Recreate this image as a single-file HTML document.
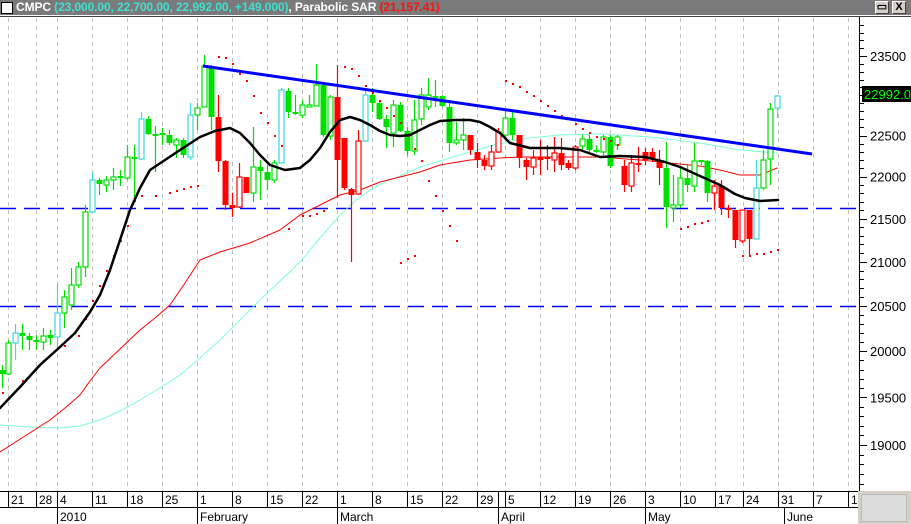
<!DOCTYPE html>
<html><head><meta charset="utf-8">
<style>
html,body{margin:0;padding:0;background:#fff;width:911px;height:524px;overflow:hidden;font-family:"Liberation Sans",sans-serif}
#bar{position:absolute;left:0;top:0;width:911px;height:15px;background:#7a7a7a;border-bottom:1px solid #fff}
#bar2{position:absolute;left:0;top:16px;width:911px;height:1px;background:#404040}
#ttl{position:absolute;left:16px;top:0;font-size:12px;font-weight:bold;line-height:14px;color:#fff;white-space:nowrap;letter-spacing:-0.1px}
.cy{color:#40e0d0}.rd{color:#ff1010}
#chk{position:absolute;left:1px;top:2px;width:12px;height:12px;background:#fff;border:1px solid #000;box-sizing:border-box}
.btn{position:absolute;top:1px;width:14px;height:13px;background:#d4d0c8;border:1px solid;border-color:#fff #404040 #404040 #fff;box-sizing:border-box;font-size:11px;line-height:11px;text-align:center;color:#000;font-weight:bold}
svg{position:absolute;left:0;top:0}
</style></head><body>
<div id="bar"></div><div id="bar2"></div>
<div id="chk"></div>
<div id="ttl">CMPC <span class="cy">(23,000.00, 22,700.00, 22,992.00, +149.000)</span>, Parabolic SAR <span class="rd">(21,157.41)</span></div>
<div class="btn" style="left:875px">&#9645;</div>
<div class="btn" style="left:892px">X</div>
<svg id="s" width="911" height="524" xmlns="http://www.w3.org/2000/svg"></svg>
<script>
var s=document.getElementById('s'),h='';
var gx=[8,36,57,92,127,162,197,232,267,302,337,372,407,442,477,505,540,575,610,645,680,715,743,778,813,848];
gx.forEach(function(x){h+='<line x1="'+(x+.5)+'" y1="18" x2="'+(x+.5)+'" y2="491" stroke="#bdbdbd" stroke-dasharray="4,4"/>';});
h+='<line x1="0" y1="208.5" x2="858" y2="208.5" stroke="#0000ff" stroke-width="1.5" stroke-dasharray="16,8"/>';
h+='<line x1="0" y1="306.5" x2="858" y2="306.5" stroke="#0000ff" stroke-width="1.5" stroke-dasharray="16,8"/>';
function pl(pts,c,w){return '<polyline fill="none" stroke-linejoin="round" stroke-linecap="round" stroke="'+c+'" stroke-width="'+w+'" points="'+pts+'"/>';}
h+=pl("0,425 30,427 60,428 80,426 100,420 120,411 140,400 160,388 180,375 200,358 220,340 240,320 260,300 280,281 300,262 320,238 340,215 355,201 370,190 385,182 400,176 420,167 440,161 460,155 490,146 520,139 540,137 560,135 600,134 650,137 700,143 740,150 777,153","#7fffd4",1);
h+=pl("0,452 25,436 50,420 65,408 80,395 90,381 100,368 120,349 140,330 155,318 170,305 185,283 200,260 220,252 250,243 280,230 300,215 320,205 340,195 360,190 380,182 400,177 420,172 440,165 470,160 500,158 520,157 600,157 640,160 700,166 720,170 740,175 760,175 777,168","#ff0000",1);
var C=[[2,370,374,365,388,'G'],[8,343,374,340,375,'g'],[15,333,343,324,360,'c'],[22,333,336,324,350,'G'],[29,336,340,333,350,'G'],[36,340,342,335,350,'G'],[43,336,342,328,350,'g'],[50,335,338,330,345,'G'],[57,313,337,283,350,'c'],[64,297,313,290,328,'g'],[71,285,305,268,310,'g'],[78,267,285,262,288,'g'],[85,212,267,205,277,'g'],[92,180,212,172,212,'c'],[99,180,184,178,195,'G'],[106,180,185,176,192,'g'],[113,177,180,168,190,'g'],[120,176,178,170,186,'G'],[127,157,178,145,180,'g'],[134,157,159,145,200,'G'],[141,119,159,112,160,'c'],[148,119,134,116,135,'G'],[155,134,135,126,172,'G'],[162,133,134,128,145,'G'],[169,135,143,130,145,'G'],[176,140,145,138,158,'g'],[183,140,155,138,158,'G'],[190,115,157,103,160,'c'],[197,108,115,103,130,'g'],[204,66,107,55,107,'g'],[211,67,117,65,130,'G'],[218,117,161,95,172,'R'],[225,161,205,160,210,'R'],[232,205,208,193,217,'R'],[239,177,207,163,208,'r'],[246,177,193,177,193,'R'],[253,167,193,127,202,'g'],[260,167,171,160,200,'G'],[267,172,180,165,190,'G'],[274,163,180,160,183,'g'],[281,90,163,88,163,'c'],[288,91,112,88,118,'G'],[295,112,114,95,115,'G'],[302,105,115,100,118,'g'],[309,105,106,95,106,'g'],[316,85,106,64,106,'g'],[323,85,135,83,137,'G'],[330,97,136,95,140,'g'],[337,97,160,65,198,'R'],[344,138,188,138,190,'R'],[351,189,195,188,262,'R'],[358,141,194,130,195,'r'],[365,95,141,90,142,'c'],[372,95,103,88,112,'G'],[379,103,119,100,120,'G'],[386,119,127,115,148,'G'],[393,105,133,100,147,'g'],[400,105,131,102,132,'G'],[407,131,151,127,156,'G'],[414,120,151,100,155,'g'],[421,95,119,88,125,'g'],[428,95,107,78,110,'g'],[435,96,98,80,107,'G'],[442,96,106,95,107,'G'],[449,107,143,100,152,'G'],[456,140,143,122,145,'g'],[463,135,140,118,150,'g'],[470,135,150,135,155,'R'],[477,152,160,143,168,'R'],[484,160,166,155,170,'R'],[491,152,166,145,170,'r'],[498,132,152,128,153,'r'],[505,118,135,110,140,'g'],[512,118,135,110,140,'G'],[519,135,158,135,168,'R'],[526,160,167,158,180,'R'],[533,158,167,150,175,'r'],[540,157,160,140,175,'R'],[547,157,159,145,170,'R'],[554,153,160,137,172,'r'],[561,153,165,138,170,'R'],[568,163,168,160,170,'R'],[575,147,168,145,170,'r'],[582,139,146,135,150,'g'],[589,139,150,135,152,'G'],[596,150,152,145,153,'G'],[603,137,152,135,155,'g'],[610,137,166,135,168,'G'],[617,137,145,135,150,'g'],[624,166,185,160,192,'R'],[631,163,186,155,192,'r'],[638,163,165,147,172,'R'],[645,152,160,148,165,'R'],[652,152,158,148,162,'R'],[659,160,168,150,185,'R'],[666,168,207,142,228,'G'],[673,205,208,175,222,'g'],[680,178,205,168,208,'g'],[687,178,185,165,192,'G'],[694,161,186,143,192,'g'],[701,160,162,160,165,'G'],[707,161,193,160,202,'G'],[714,186,193,180,210,'r'],[721,186,208,180,215,'R'],[728,208,210,205,218,'R'],[735,210,240,210,248,'R'],[742,210,241,210,243,'r'],[749,210,239,210,256,'R'],[756,188,239,160,239,'c'],[763,160,188,150,190,'g'],[770,109,159,103,185,'g'],[777,96,108,95,118,'c']];
C.forEach(function(c){var x=c[0],t=c[1],b=c[2],hi=c[3],lo=c[4],k=c[5];
var col=(k=='G'||k=='g')?'#00e000':(k=='c'?'#40d8d8':'#ff0000');
var fill=(k=='G'||k=='R');
h+='<line x1="'+(x+.5)+'" y1="'+hi+'" x2="'+(x+.5)+'" y2="'+lo+'" stroke="'+col+'" stroke-width="1.2"/>';
if(b-t<2)b=t+2;
if(fill)h+='<rect x="'+(x-2.5)+'" y="'+t+'" width="6" height="'+(b-t)+'" fill="'+col+'"/>';
else h+='<rect x="'+(x-2)+'" y="'+t+'" width="5" height="'+(b-t)+'" fill="#fff" stroke="'+col+'" stroke-width="1.2"/>';});
var sar=[[2,392],[22,380],[43,360],[64,345],[78,335],[85,318],[92,300],[99,285],[106,270],[113,255],[120,240],[127,225],[134,200],[141,195],[155,195],[169,192],[176,190],[183,188],[190,186],[197,185],[218,56],[225,57],[232,63],[239,73],[246,80],[253,95],[260,112],[267,122],[274,135],[281,145],[288,228],[302,215],[309,215],[316,213],[323,210],[344,66],[351,68],[358,75],[365,85],[372,92],[379,100],[386,107],[393,115],[400,122],[407,135],[414,148],[421,160],[428,180],[435,195],[442,210],[449,225],[456,240],[400,262],[407,258],[414,255],[505,80],[512,83],[519,86],[526,91],[533,95],[540,100],[547,105],[554,110],[561,115],[568,118],[575,123],[582,128],[589,132],[596,136],[603,138],[610,140],[617,144],[680,228],[687,226],[694,223],[701,222],[707,220],[742,255],[749,255],[756,253],[763,253],[770,251],[777,249]];
sar.forEach(function(p){h+='<rect x="'+p[0]+'" y="'+p[1]+'" width="2" height="2" fill="#ff0000"/>';});
h+=pl("0,408 20,387 40,365 60,347 75,333 90,312 100,295 110,270 120,240 130,210 140,188 150,170 165,160 180,150 200,137 215,131 230,128 240,133 250,143 260,155 270,165 285,170 300,168 310,160 320,148 330,132 340,120 350,117 360,120 370,125 380,131 390,135 400,136 410,135 420,130 430,125 440,121 455,120 470,120 480,122 490,127 500,133 510,143 530,148 560,148 580,150 600,157 620,156 645,157 665,162 680,167 700,176 720,185 735,194 745,198 760,201 778,200","#000",2.5);
h+='<line x1="203" y1="66" x2="812" y2="154" stroke="#0000ff" stroke-width="3"/>';
h+='<rect x="859" y="18" width="52" height="474" fill="#fff"/>';
h+='<line x1="859.5" y1="17" x2="859.5" y2="491" stroke="#000"/>';
function Y(p){return 56+1830*Math.log(23500/p);}
for(var p=18500;p<=24000;p+=100){var y=Y(p);if(y<18||y>490)continue;var maj=(p%500==0);
h+='<line x1="859" y1="'+(Math.round(y)+.5)+'" x2="'+(maj?867:864)+'" y2="'+(Math.round(y)+.5)+'" stroke="#000"/>';
if(maj&&p<=23500&&p>=19000)h+='<text x="870" y="'+(y+5)+'" font-size="13" font-family="Liberation Sans,sans-serif" fill="#000">'+p+'</text>';}
h+='<rect x="862" y="86" width="49" height="16" fill="#000"/><text x="864" y="99" font-size="13" fill="#00ff00" font-family="Liberation Sans,sans-serif">22992.00</text>';
h+='<rect x="0" y="491" width="911" height="33" fill="#fff"/>';
h+='<line x1="0" y1="491.5" x2="858" y2="491.5" stroke="#000"/><line x1="0" y1="507.5" x2="858" y2="507.5" stroke="#000"/>';
var dl=[[8,"21"],[36,"28"],[57,"4"],[92,"11"],[127,"18"],[162,"25"],[197,"1"],[232,"8"],[267,"15"],[302,"22"],[337,"1"],[372,"8"],[407,"15"],[442,"22"],[477,"29"],[505,"5"],[540,"12"],[575,"19"],[610,"26"],[645,"3"],[680,"10"],[715,"17"],[743,"24"],[778,"31"],[813,"7"],[848,"14"]];
dl.forEach(function(d){h+='<line x1="'+(d[0]+.5)+'" y1="491" x2="'+(d[0]+.5)+'" y2="507" stroke="#000"/><text x="'+(d[0]+3)+'" y="504" font-size="12" font-family="Liberation Sans,sans-serif">'+d[1]+'</text>';});
h+='<line x1="498.5" y1="491" x2="498.5" y2="507" stroke="#000"/>';
[[57,"2010"],[197,"February"],[337,"March"],[498,"April"],[645,"May"],[784,"June"]].forEach(function(m){h+='<line x1="'+(m[0]+.5)+'" y1="507" x2="'+(m[0]+.5)+'" y2="524" stroke="#000"/><text x="'+(m[0]+3)+'" y="521" font-size="12" font-family="Liberation Sans,sans-serif">'+m[1]+'</text>';});
h+='<rect x="858" y="491" width="53" height="33" fill="#d4d0c8"/><rect x="861.5" y="494.5" width="45" height="27" fill="#dcdcdc" stroke="#bbb"/>';
s.innerHTML=h;
</script>
</body></html>
